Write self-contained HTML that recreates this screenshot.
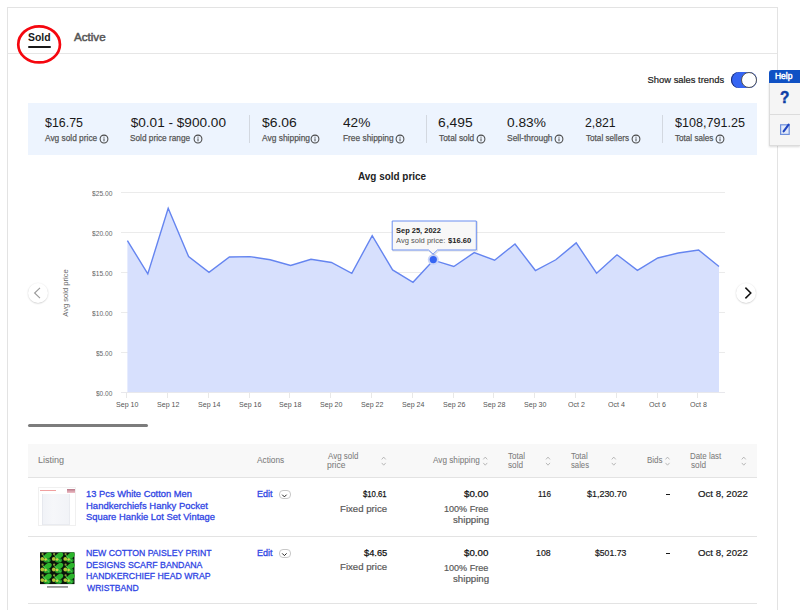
<!DOCTYPE html><html><head><meta charset="utf-8"><style>
html,body{margin:0;padding:0;background:#fff;width:800px;height:610px;overflow:hidden;position:relative;font-family:"Liberation Sans",sans-serif;}
.t{position:absolute;white-space:nowrap;line-height:normal;transform-origin:0 0;}
svg{position:absolute;left:0;top:0;overflow:visible}
</style></head><body>
<div style="position:absolute;left:7px;top:7px;width:771px;height:700px;border:1px solid #e3e3e3;box-sizing:border-box;"></div>
<div style="position:absolute;left:8px;top:53px;width:769px;height:1px;background:#e6e6e6;"></div>
<div class="t" style="left:28.11px;top:31.01px;font-size:10.60px;color:#191919;font-weight:bold;transform:scaleX(0.983);">Sold</div>
<div style="position:absolute;left:28px;top:46.3px;width:23px;height:1.9px;background:#191919;border-radius:1px;"></div>
<div class="t" style="left:74.28px;top:30.73px;font-size:10.80px;color:#555;transform:scaleX(1.076);-webkit-text-stroke:0.45px currentColor;">Active</div>
<div class="t" style="left:647.58px;top:73.89px;font-size:9.40px;color:#222;-webkit-text-stroke:0.2px currentColor;">Show sales trends</div>
<div style="position:absolute;left:730.5px;top:71.5px;width:26.5px;height:16.8px;background:#3665f3;border-radius:9px;box-shadow:inset 1px 0 0 #1a2a70;"></div>
<div style="position:absolute;left:740.5px;top:71.5px;width:16.5px;height:16.5px;background:#fff;border-radius:50%;box-sizing:border-box;border:1px solid #555;"></div>
<div style="position:absolute;left:28px;top:103px;width:729px;height:52px;background:#edf4fe;"></div>
<div class="t" style="left:44.63px;top:115.09px;font-size:13.60px;color:#191919;transform:scaleX(0.913);">$16.75</div>
<div class="t" style="left:44.73px;top:132.30px;font-size:9.50px;color:#555;transform:scaleX(0.877);-webkit-text-stroke:0.25px currentColor;">Avg sold price</div>
<svg style="left:98.75px;top:133.5px" width="10" height="10" viewBox="0 0 10 10"><circle cx="5" cy="5" r="3.9" fill="none" stroke="#4a4a4a" stroke-width="1.05"/><rect x="4.5" y="4.4" width="1" height="2.9" fill="#4a4a4a"/><rect x="4.5" y="2.7" width="1" height="1" fill="#4a4a4a"/></svg>
<div class="t" style="left:130.71px;top:115.09px;font-size:13.60px;color:#191919;">$0.01 - $900.00</div>
<div class="t" style="left:130.48px;top:132.30px;font-size:9.50px;color:#555;transform:scaleX(0.868);-webkit-text-stroke:0.25px currentColor;">Sold price range</div>
<svg style="left:192.50px;top:133.5px" width="10" height="10" viewBox="0 0 10 10"><circle cx="5" cy="5" r="3.9" fill="none" stroke="#4a4a4a" stroke-width="1.05"/><rect x="4.5" y="4.4" width="1" height="2.9" fill="#4a4a4a"/><rect x="4.5" y="2.7" width="1" height="1" fill="#4a4a4a"/></svg>
<div class="t" style="left:262.26px;top:115.09px;font-size:13.60px;color:#191919;transform:scaleX(1.021);">$6.06</div>
<div class="t" style="left:262.38px;top:132.30px;font-size:9.50px;color:#555;transform:scaleX(0.886);-webkit-text-stroke:0.25px currentColor;">Avg shipping</div>
<svg style="left:310.25px;top:133.5px" width="10" height="10" viewBox="0 0 10 10"><circle cx="5" cy="5" r="3.9" fill="none" stroke="#4a4a4a" stroke-width="1.05"/><rect x="4.5" y="4.4" width="1" height="2.9" fill="#4a4a4a"/><rect x="4.5" y="2.7" width="1" height="1" fill="#4a4a4a"/></svg>
<div class="t" style="left:343.10px;top:115.09px;font-size:13.60px;color:#191919;transform:scaleX(1.006);">42%</div>
<div class="t" style="left:342.72px;top:132.30px;font-size:9.50px;color:#555;transform:scaleX(0.878);-webkit-text-stroke:0.25px currentColor;">Free shipping</div>
<svg style="left:394.90px;top:133.5px" width="10" height="10" viewBox="0 0 10 10"><circle cx="5" cy="5" r="3.9" fill="none" stroke="#4a4a4a" stroke-width="1.05"/><rect x="4.5" y="4.4" width="1" height="2.9" fill="#4a4a4a"/><rect x="4.5" y="2.7" width="1" height="1" fill="#4a4a4a"/></svg>
<div class="t" style="left:438.31px;top:115.09px;font-size:13.60px;color:#191919;transform:scaleX(1.017);">6,495</div>
<div class="t" style="left:438.82px;top:132.30px;font-size:9.50px;color:#555;transform:scaleX(0.878);-webkit-text-stroke:0.25px currentColor;">Total sold</div>
<svg style="left:475.60px;top:133.5px" width="10" height="10" viewBox="0 0 10 10"><circle cx="5" cy="5" r="3.9" fill="none" stroke="#4a4a4a" stroke-width="1.05"/><rect x="4.5" y="4.4" width="1" height="2.9" fill="#4a4a4a"/><rect x="4.5" y="2.7" width="1" height="1" fill="#4a4a4a"/></svg>
<div class="t" style="left:507.06px;top:115.09px;font-size:13.60px;color:#191919;transform:scaleX(1.009);">0.83%</div>
<div class="t" style="left:507.22px;top:132.30px;font-size:9.50px;color:#555;transform:scaleX(0.889);-webkit-text-stroke:0.25px currentColor;">Sell-through</div>
<svg style="left:554.40px;top:133.5px" width="10" height="10" viewBox="0 0 10 10"><circle cx="5" cy="5" r="3.9" fill="none" stroke="#4a4a4a" stroke-width="1.05"/><rect x="4.5" y="4.4" width="1" height="2.9" fill="#4a4a4a"/><rect x="4.5" y="2.7" width="1" height="1" fill="#4a4a4a"/></svg>
<div class="t" style="left:585.49px;top:115.09px;font-size:13.60px;color:#191919;transform:scaleX(0.902);">2,821</div>
<div class="t" style="left:585.92px;top:132.30px;font-size:9.50px;color:#555;transform:scaleX(0.857);-webkit-text-stroke:0.25px currentColor;">Total sellers</div>
<svg style="left:630.80px;top:133.5px" width="10" height="10" viewBox="0 0 10 10"><circle cx="5" cy="5" r="3.9" fill="none" stroke="#4a4a4a" stroke-width="1.05"/><rect x="4.5" y="4.4" width="1" height="2.9" fill="#4a4a4a"/><rect x="4.5" y="2.7" width="1" height="1" fill="#4a4a4a"/></svg>
<div class="t" style="left:675.47px;top:115.09px;font-size:13.60px;color:#191919;transform:scaleX(0.926);">$108,791.25</div>
<div class="t" style="left:675.42px;top:132.30px;font-size:9.50px;color:#555;transform:scaleX(0.855);-webkit-text-stroke:0.25px currentColor;">Total sales</div>
<svg style="left:715.00px;top:133.5px" width="10" height="10" viewBox="0 0 10 10"><circle cx="5" cy="5" r="3.9" fill="none" stroke="#4a4a4a" stroke-width="1.05"/><rect x="4.5" y="4.4" width="1" height="2.9" fill="#4a4a4a"/><rect x="4.5" y="2.7" width="1" height="1" fill="#4a4a4a"/></svg>
<div style="position:absolute;left:249px;top:115px;width:1px;height:28px;background:#d3d8e0;"></div>
<div style="position:absolute;left:426px;top:115px;width:1px;height:28px;background:#d3d8e0;"></div>
<div style="position:absolute;left:662px;top:115px;width:1px;height:28px;background:#d3d8e0;"></div>
<div class="t" style="left:357.76px;top:170.75px;font-size:10.00px;color:#222;font-weight:bold;transform:scaleX(0.993);">Avg sold price</div>
<svg width="800" height="610" viewBox="0 0 800 610"><rect x="121" y="192" width="604" height="1" fill="#ebebeb"/><rect x="121" y="232" width="604" height="1" fill="#ebebeb"/><rect x="121" y="272" width="604" height="1" fill="#ebebeb"/><rect x="121" y="312" width="604" height="1" fill="#ebebeb"/><rect x="121" y="352" width="604" height="1" fill="#ebebeb"/><polygon points="127.40,392.5 127.40,240.60 147.80,273.90 168.20,208.20 188.60,256.60 209.00,272.40 229.40,257.00 249.80,256.60 270.20,259.75 290.60,265.40 311.00,259.30 331.40,262.50 351.80,273.25 372.20,235.70 392.60,269.90 413.00,282.25 433.40,260.20 453.80,266.50 474.20,252.60 494.60,260.20 515.00,244.00 535.40,270.50 555.80,259.75 576.20,242.90 596.60,273.25 617.00,254.80 637.40,270.30 657.80,258.00 678.20,253.00 698.60,250.00 719.00,266.50 719.00,392.5" fill="#d7e0fd"/><rect x="121" y="392" width="604" height="1" fill="#e8e8ec"/><polyline points="127.40,240.60 147.80,273.90 168.20,208.20 188.60,256.60 209.00,272.40 229.40,257.00 249.80,256.60 270.20,259.75 290.60,265.40 311.00,259.30 331.40,262.50 351.80,273.25 372.20,235.70 392.60,269.90 413.00,282.25 433.40,260.20 453.80,266.50 474.20,252.60 494.60,260.20 515.00,244.00 535.40,270.50 555.80,259.75 576.20,242.90 596.60,273.25 617.00,254.80 637.40,270.30 657.80,258.00 678.20,253.00 698.60,250.00 719.00,266.50" fill="none" stroke="#6585f0" stroke-width="1.4" stroke-linejoin="miter"/><rect x="126" y="393" width="1" height="5" fill="#e8e8e8"/><rect x="167" y="393" width="1" height="5" fill="#e8e8e8"/><rect x="208" y="393" width="1" height="5" fill="#e8e8e8"/><rect x="249" y="393" width="1" height="5" fill="#e8e8e8"/><rect x="289" y="393" width="1" height="5" fill="#e8e8e8"/><rect x="330" y="393" width="1" height="5" fill="#e8e8e8"/><rect x="371" y="393" width="1" height="5" fill="#e8e8e8"/><rect x="412" y="393" width="1" height="5" fill="#e8e8e8"/><rect x="453" y="393" width="1" height="5" fill="#e8e8e8"/><rect x="493" y="393" width="1" height="5" fill="#e8e8e8"/><rect x="534" y="393" width="1" height="5" fill="#e8e8e8"/><rect x="575" y="393" width="1" height="5" fill="#e8e8e8"/><rect x="616" y="393" width="1" height="5" fill="#e8e8e8"/><rect x="657" y="393" width="1" height="5" fill="#e8e8e8"/><rect x="697" y="393" width="1" height="5" fill="#e8e8e8"/><circle cx="433.3" cy="259.6" r="5.5" fill="#c9d4f8"/><circle cx="433.3" cy="259.6" r="3.6" fill="#3665f3"/><path d="M393.2,222 H477.3 V251 H438.5 L434,255 L429.5,251 H393.2 Z" fill="none" stroke="rgba(0,0,0,0.12)" stroke-width="1.2"/><path d="M392.2,221 H476.3 V250 H437.5 L433,254.2 L428.5,250 H392.2 Z" fill="#f8f8f8" stroke="#6a8ef0" stroke-width="1"/></svg>
<div class="t" style="left:91.88px;top:188.92px;font-size:7.60px;color:#666;transform:scaleX(0.876);">$25.00</div>
<div class="t" style="left:91.88px;top:228.92px;font-size:7.60px;color:#666;transform:scaleX(0.876);">$20.00</div>
<div class="t" style="left:91.88px;top:268.92px;font-size:7.60px;color:#666;transform:scaleX(0.876);">$15.00</div>
<div class="t" style="left:91.88px;top:308.92px;font-size:7.60px;color:#666;transform:scaleX(0.876);">$10.00</div>
<div class="t" style="left:95.93px;top:348.92px;font-size:7.60px;color:#666;transform:scaleX(0.858);">$5.00</div>
<div class="t" style="left:95.93px;top:388.92px;font-size:7.60px;color:#666;transform:scaleX(0.858);">$0.00</div>
<div class="t" style="left:116.18px;top:400.22px;font-size:7.60px;color:#555;transform:scaleX(0.930);">Sep 10</div>
<div class="t" style="left:157.02px;top:400.22px;font-size:7.60px;color:#555;transform:scaleX(0.930);">Sep 12</div>
<div class="t" style="left:197.74px;top:400.22px;font-size:7.60px;color:#555;transform:scaleX(0.930);">Sep 14</div>
<div class="t" style="left:238.59px;top:400.22px;font-size:7.60px;color:#555;transform:scaleX(0.930);">Sep 16</div>
<div class="t" style="left:279.39px;top:400.22px;font-size:7.60px;color:#555;transform:scaleX(0.930);">Sep 18</div>
<div class="t" style="left:320.18px;top:400.22px;font-size:7.60px;color:#555;transform:scaleX(0.930);">Sep 20</div>
<div class="t" style="left:361.02px;top:400.22px;font-size:7.60px;color:#555;transform:scaleX(0.930);">Sep 22</div>
<div class="t" style="left:401.74px;top:400.22px;font-size:7.60px;color:#555;transform:scaleX(0.930);">Sep 24</div>
<div class="t" style="left:442.59px;top:400.22px;font-size:7.60px;color:#555;transform:scaleX(0.930);">Sep 26</div>
<div class="t" style="left:483.39px;top:400.22px;font-size:7.60px;color:#555;transform:scaleX(0.930);">Sep 28</div>
<div class="t" style="left:524.18px;top:400.22px;font-size:7.60px;color:#555;transform:scaleX(0.930);">Sep 30</div>
<div class="t" style="left:567.77px;top:400.22px;font-size:7.60px;color:#555;transform:scaleX(0.930);">Oct 2</div>
<div class="t" style="left:608.49px;top:400.22px;font-size:7.60px;color:#555;transform:scaleX(0.930);">Oct 4</div>
<div class="t" style="left:649.34px;top:400.22px;font-size:7.60px;color:#555;transform:scaleX(0.930);">Oct 6</div>
<div class="t" style="left:690.14px;top:400.22px;font-size:7.60px;color:#555;transform:scaleX(0.930);">Oct 8</div>
<div class="t" style="left:396.39px;top:225.54px;font-size:7.80px;color:#222;font-weight:bold;transform:scaleX(0.959);">Sep 25, 2022</div>
<div class="t" style="left:396.18px;top:235.54px;font-size:7.80px;color:#555;transform:scaleX(0.968);">Avg sold price:</div>
<div class="t" style="left:447.50px;top:235.54px;font-size:7.80px;color:#222;font-weight:bold;transform:scaleX(0.977);">$16.60</div>
<div class="t" style="left:35.75px;top:288px;width:60px;text-align:center;font-size:7.6px;color:#6a6a6a;transform-origin:50% 50%;transform:rotate(-90deg);line-height:10px;">Avg sold price</div>
<div style="position:absolute;left:27.9px;top:282.8px;width:20px;height:20px;border-radius:50%;background:#fff;box-shadow:0 0.5px 1.6px rgba(0,0,0,0.22);"></div>
<div style="position:absolute;left:736.3px;top:283px;width:20px;height:20px;border-radius:50%;background:#fff;box-shadow:0 0.5px 1.6px rgba(0,0,0,0.22);"></div>
<svg width="800" height="610"><path d="M40,287.8 L34.6,293 L40,298.2" fill="none" stroke="#999" stroke-width="1.1"/><path d="M745.4,287.6 L750.8,293 L745.4,298.4" fill="none" stroke="#111" stroke-width="1.5"/></svg>
<div style="position:absolute;left:28px;top:424px;width:120px;height:3.2px;background:#7c7c7c;border-radius:2px;"></div>
<div style="position:absolute;left:28px;top:444px;width:729px;height:33px;background:#f8f8f8;"></div>
<div style="position:absolute;left:28px;top:477px;width:729px;height:1px;background:#e3e3e3;"></div>
<div style="position:absolute;left:28px;top:536px;width:729px;height:1px;background:#e3e3e3;"></div>
<div style="position:absolute;left:28px;top:603px;width:729px;height:1px;background:#e3e3e3;"></div>
<div class="t" style="left:37.76px;top:455.34px;font-size:8.80px;color:#7c7c7c;transform:scaleX(1.027);-webkit-text-stroke:0.05px currentColor;">Listing</div>
<div class="t" style="left:257.08px;top:455.44px;font-size:8.80px;color:#7c7c7c;transform:scaleX(0.943);-webkit-text-stroke:0.05px currentColor;">Actions</div>
<div class="t" style="left:327.78px;top:450.94px;font-size:8.80px;color:#7c7c7c;transform:scaleX(0.903);-webkit-text-stroke:0.05px currentColor;">Avg sold</div>
<div class="t" style="left:327.25px;top:460.14px;font-size:8.80px;color:#7c7c7c;transform:scaleX(0.971);-webkit-text-stroke:0.05px currentColor;">price</div>
<div class="t" style="left:433.38px;top:455.44px;font-size:8.80px;color:#7c7c7c;transform:scaleX(0.931);-webkit-text-stroke:0.05px currentColor;">Avg shipping</div>
<div class="t" style="left:508.32px;top:450.74px;font-size:8.80px;color:#7c7c7c;transform:scaleX(0.915);-webkit-text-stroke:0.05px currentColor;">Total</div>
<div class="t" style="left:508.28px;top:460.14px;font-size:8.80px;color:#7c7c7c;transform:scaleX(0.932);-webkit-text-stroke:0.05px currentColor;">sold</div>
<div class="t" style="left:570.58px;top:450.74px;font-size:8.80px;color:#7c7c7c;transform:scaleX(0.901);-webkit-text-stroke:0.05px currentColor;">Total</div>
<div class="t" style="left:570.54px;top:460.14px;font-size:8.80px;color:#7c7c7c;transform:scaleX(0.878);-webkit-text-stroke:0.05px currentColor;">sales</div>
<div class="t" style="left:646.80px;top:455.34px;font-size:8.80px;color:#7c7c7c;transform:scaleX(0.905);-webkit-text-stroke:0.05px currentColor;">Bids</div>
<div class="t" style="left:690.10px;top:450.74px;font-size:8.80px;color:#7c7c7c;transform:scaleX(0.900);-webkit-text-stroke:0.05px currentColor;">Date last</div>
<div class="t" style="left:690.53px;top:460.14px;font-size:8.80px;color:#7c7c7c;transform:scaleX(0.932);-webkit-text-stroke:0.05px currentColor;">sold</div>
<svg width="800" height="610"><path d="M381.70,459.4 L383.70,457.1 L385.70,459.4 M381.70,462.9 L383.70,465.2 L385.70,462.9" fill="none" stroke="#a8a8a8" stroke-width="0.8"/><path d="M483.25,459.4 L485.25,457.1 L487.25,459.4 M483.25,462.9 L485.25,465.2 L487.25,462.9" fill="none" stroke="#a8a8a8" stroke-width="0.8"/><path d="M546.00,459.4 L548.00,457.1 L550.00,459.4 M546.00,462.9 L548.00,465.2 L550.00,462.9" fill="none" stroke="#a8a8a8" stroke-width="0.8"/><path d="M611.75,459.4 L613.75,457.1 L615.75,459.4 M611.75,462.9 L613.75,465.2 L615.75,462.9" fill="none" stroke="#a8a8a8" stroke-width="0.8"/><path d="M665.50,459.4 L667.50,457.1 L669.50,459.4 M665.50,462.9 L667.50,465.2 L669.50,462.9" fill="none" stroke="#a8a8a8" stroke-width="0.8"/><path d="M741.75,459.4 L743.75,457.1 L745.75,459.4 M741.75,462.9 L743.75,465.2 L745.75,462.9" fill="none" stroke="#a8a8a8" stroke-width="0.8"/></svg>
<div class="t" style="left:86.19px;top:488.21px;font-size:9.60px;color:#2f45e4;transform:scaleX(0.974);-webkit-text-stroke:0.3px currentColor;">13 Pcs White Cotton Men</div>
<div class="t" style="left:86.12px;top:499.81px;font-size:9.60px;color:#2f45e4;transform:scaleX(0.990);-webkit-text-stroke:0.3px currentColor;">Handkerchiefs Hanky Pocket</div>
<div class="t" style="left:86.48px;top:511.41px;font-size:9.60px;color:#2f45e4;transform:scaleX(0.980);-webkit-text-stroke:0.3px currentColor;">Square Hankie Lot Set Vintage</div>
<div class="t" style="left:256.76px;top:488.21px;font-size:9.60px;color:#2f45e4;transform:scaleX(0.937);-webkit-text-stroke:0.3px currentColor;">Edit</div>
<div style="position:absolute;left:278.5px;top:490.29999999999995px;width:12px;height:8.6px;border:1px solid #c8c8c8;border-radius:4px;box-sizing:border-box;background:#fff;"></div>
<div class="t" style="left:363.22px;top:488.30px;font-size:9.50px;color:#111;transform:scaleX(0.814);-webkit-text-stroke:0.25px currentColor;">$10.61</div>
<div class="t" style="left:339.81px;top:502.60px;font-size:9.50px;color:#595959;transform:scaleX(1.014);-webkit-text-stroke:0.2px currentColor;">Fixed price</div>
<div class="t" style="left:464.10px;top:488.30px;font-size:9.50px;color:#111;transform:scaleX(1.021);-webkit-text-stroke:0.25px currentColor;">$0.00</div>
<div class="t" style="left:444.11px;top:503.00px;font-size:9.50px;color:#595959;transform:scaleX(0.953);-webkit-text-stroke:0.2px currentColor;">100% Free</div>
<div class="t" style="left:452.54px;top:514.20px;font-size:9.50px;color:#595959;transform:scaleX(1.020);-webkit-text-stroke:0.2px currentColor;">shipping</div>
<div class="t" style="left:537.58px;top:488.30px;font-size:9.50px;color:#191919;transform:scaleX(0.856);-webkit-text-stroke:0.2px currentColor;">116</div>
<div class="t" style="left:586.86px;top:488.30px;font-size:9.50px;color:#191919;transform:scaleX(0.940);-webkit-text-stroke:0.2px currentColor;">$1,230.70</div>
<div style="position:absolute;left:666.3px;top:493.9px;width:3.6px;height:1.3px;background:#191919;"></div>
<div class="t" style="left:697.50px;top:488.30px;font-size:9.50px;color:#191919;transform:scaleX(1.013);-webkit-text-stroke:0.2px currentColor;">Oct 8, 2022</div>
<div class="t" style="left:86.19px;top:546.91px;font-size:9.60px;color:#2f45e4;transform:scaleX(0.906);-webkit-text-stroke:0.3px currentColor;">NEW COTTON PAISLEY PRINT</div>
<div class="t" style="left:86.18px;top:558.51px;font-size:9.60px;color:#2f45e4;transform:scaleX(0.914);-webkit-text-stroke:0.3px currentColor;">DESIGNS SCARF BANDANA</div>
<div class="t" style="left:86.18px;top:570.11px;font-size:9.60px;color:#2f45e4;transform:scaleX(0.913);-webkit-text-stroke:0.3px currentColor;">HANDKERCHIEF HEAD WRAP</div>
<div class="t" style="left:86.87px;top:581.71px;font-size:9.60px;color:#2f45e4;transform:scaleX(0.898);-webkit-text-stroke:0.3px currentColor;">WRISTBAND</div>
<div class="t" style="left:256.76px;top:546.91px;font-size:9.60px;color:#2f45e4;transform:scaleX(0.937);-webkit-text-stroke:0.3px currentColor;">Edit</div>
<div style="position:absolute;left:278.5px;top:549.0px;width:12px;height:8.6px;border:1px solid #c8c8c8;border-radius:4px;box-sizing:border-box;background:#fff;"></div>
<div class="t" style="left:363.61px;top:547.00px;font-size:9.50px;color:#111;transform:scaleX(0.979);-webkit-text-stroke:0.25px currentColor;">$4.65</div>
<div class="t" style="left:339.81px;top:561.30px;font-size:9.50px;color:#595959;transform:scaleX(1.014);-webkit-text-stroke:0.2px currentColor;">Fixed price</div>
<div class="t" style="left:464.10px;top:547.00px;font-size:9.50px;color:#111;transform:scaleX(1.021);-webkit-text-stroke:0.25px currentColor;">$0.00</div>
<div class="t" style="left:444.11px;top:561.70px;font-size:9.50px;color:#595959;transform:scaleX(0.953);-webkit-text-stroke:0.2px currentColor;">100% Free</div>
<div class="t" style="left:452.54px;top:572.90px;font-size:9.50px;color:#595959;transform:scaleX(1.020);-webkit-text-stroke:0.2px currentColor;">shipping</div>
<div class="t" style="left:535.93px;top:547.00px;font-size:9.50px;color:#191919;transform:scaleX(0.924);-webkit-text-stroke:0.2px currentColor;">108</div>
<div class="t" style="left:595.36px;top:547.00px;font-size:9.50px;color:#191919;transform:scaleX(0.910);-webkit-text-stroke:0.2px currentColor;">$501.73</div>
<div style="position:absolute;left:666.3px;top:552.6px;width:3.6px;height:1.3px;background:#191919;"></div>
<div class="t" style="left:697.50px;top:547.00px;font-size:9.50px;color:#191919;transform:scaleX(1.013);-webkit-text-stroke:0.2px currentColor;">Oct 8, 2022</div>
<svg width="800" height="610"><path d="M282.2,494.70 L284.4,496.90 L286.6,494.70" fill="none" stroke="#222" stroke-width="1"/><path d="M282.2,553.40 L284.4,555.60 L286.6,553.40" fill="none" stroke="#222" stroke-width="1"/></svg>
<div style="position:absolute;left:38px;top:487px;width:38px;height:39px;background:#fff;border:1px solid #f0f0f0;box-sizing:border-box;"></div>
<div style="position:absolute;left:39.5px;top:489.5px;width:16px;height:1.3px;background:#f0a0a0;"></div>
<div style="position:absolute;left:67px;top:488.7px;width:8.3px;height:4.3px;background:linear-gradient(#b87888,#f0c0c8);"></div>
<div style="position:absolute;left:41.5px;top:494px;width:28px;height:30.5px;background:linear-gradient(90deg,#f0f2f7,#f6f7fa 40%,#f1f3f7);box-shadow:inset 1px 0 0 #e6e8ee,inset -1px -1px 0 #e9ebf0;"></div>
<svg width="800" height="610"><rect x="40" y="552.3" width="34.5" height="31.8" fill="#0a140a"/><ellipse cx="47.8" cy="555.7" rx="4.3" ry="2.7" fill="#2cb52c" transform="rotate(-35 47.8 555.7)"/><ellipse cx="47.0" cy="560.3" rx="3.6" ry="2.4" fill="#1f9a28"/><path d="M43.0,555.3 L49.0,561.3" stroke="#48c848" stroke-width="1.2"/><circle cx="42.3" cy="558.9" r="1.9" fill="#b4c43a"/><circle cx="45.6" cy="559.5" r="1.3" fill="#cfd24a"/><circle cx="42.6" cy="554.1" r="1.1" fill="#8a9a38"/><ellipse cx="47.8" cy="566.3" rx="4.3" ry="2.7" fill="#2cb52c" transform="rotate(-35 47.8 566.3)"/><ellipse cx="47.0" cy="570.9" rx="3.6" ry="2.4" fill="#1f9a28"/><path d="M43.0,565.9 L49.0,571.9" stroke="#48c848" stroke-width="1.2"/><circle cx="42.3" cy="569.5" r="1.9" fill="#b4c43a"/><circle cx="45.6" cy="570.1" r="1.3" fill="#cfd24a"/><circle cx="42.6" cy="564.7" r="1.1" fill="#8a9a38"/><ellipse cx="47.8" cy="576.9" rx="4.3" ry="2.7" fill="#2cb52c" transform="rotate(-35 47.8 576.9)"/><ellipse cx="47.0" cy="581.5" rx="3.6" ry="2.4" fill="#1f9a28"/><path d="M43.0,576.5 L49.0,582.5" stroke="#48c848" stroke-width="1.2"/><circle cx="42.3" cy="580.1" r="1.9" fill="#b4c43a"/><circle cx="45.6" cy="580.7" r="1.3" fill="#cfd24a"/><circle cx="42.6" cy="575.3" r="1.1" fill="#8a9a38"/><ellipse cx="59.3" cy="555.7" rx="4.3" ry="2.7" fill="#2cb52c" transform="rotate(-35 59.3 555.7)"/><ellipse cx="58.5" cy="560.3" rx="3.6" ry="2.4" fill="#1f9a28"/><path d="M54.5,555.3 L60.5,561.3" stroke="#48c848" stroke-width="1.2"/><circle cx="53.8" cy="558.9" r="1.9" fill="#b4c43a"/><circle cx="57.1" cy="559.5" r="1.3" fill="#cfd24a"/><circle cx="54.1" cy="554.1" r="1.1" fill="#8a9a38"/><ellipse cx="59.3" cy="566.3" rx="4.3" ry="2.7" fill="#2cb52c" transform="rotate(-35 59.3 566.3)"/><ellipse cx="58.5" cy="570.9" rx="3.6" ry="2.4" fill="#1f9a28"/><path d="M54.5,565.9 L60.5,571.9" stroke="#48c848" stroke-width="1.2"/><circle cx="53.8" cy="569.5" r="1.9" fill="#b4c43a"/><circle cx="57.1" cy="570.1" r="1.3" fill="#cfd24a"/><circle cx="54.1" cy="564.7" r="1.1" fill="#8a9a38"/><ellipse cx="59.3" cy="576.9" rx="4.3" ry="2.7" fill="#2cb52c" transform="rotate(-35 59.3 576.9)"/><ellipse cx="58.5" cy="581.5" rx="3.6" ry="2.4" fill="#1f9a28"/><path d="M54.5,576.5 L60.5,582.5" stroke="#48c848" stroke-width="1.2"/><circle cx="53.8" cy="580.1" r="1.9" fill="#b4c43a"/><circle cx="57.1" cy="580.7" r="1.3" fill="#cfd24a"/><circle cx="54.1" cy="575.3" r="1.1" fill="#8a9a38"/><ellipse cx="70.8" cy="555.7" rx="4.3" ry="2.7" fill="#2cb52c" transform="rotate(-35 70.8 555.7)"/><ellipse cx="70.0" cy="560.3" rx="3.6" ry="2.4" fill="#1f9a28"/><path d="M66.0,555.3 L72.0,561.3" stroke="#48c848" stroke-width="1.2"/><circle cx="65.3" cy="558.9" r="1.9" fill="#b4c43a"/><circle cx="68.6" cy="559.5" r="1.3" fill="#cfd24a"/><circle cx="65.6" cy="554.1" r="1.1" fill="#8a9a38"/><ellipse cx="70.8" cy="566.3" rx="4.3" ry="2.7" fill="#2cb52c" transform="rotate(-35 70.8 566.3)"/><ellipse cx="70.0" cy="570.9" rx="3.6" ry="2.4" fill="#1f9a28"/><path d="M66.0,565.9 L72.0,571.9" stroke="#48c848" stroke-width="1.2"/><circle cx="65.3" cy="569.5" r="1.9" fill="#b4c43a"/><circle cx="68.6" cy="570.1" r="1.3" fill="#cfd24a"/><circle cx="65.6" cy="564.7" r="1.1" fill="#8a9a38"/><ellipse cx="70.8" cy="576.9" rx="4.3" ry="2.7" fill="#2cb52c" transform="rotate(-35 70.8 576.9)"/><ellipse cx="70.0" cy="581.5" rx="3.6" ry="2.4" fill="#1f9a28"/><path d="M66.0,576.5 L72.0,582.5" stroke="#48c848" stroke-width="1.2"/><circle cx="65.3" cy="580.1" r="1.9" fill="#b4c43a"/><circle cx="68.6" cy="580.7" r="1.3" fill="#cfd24a"/><circle cx="65.6" cy="575.3" r="1.1" fill="#8a9a38"/><rect x="47" y="586.4" width="21" height="1.1" fill="#555"/></svg>
<div style="position:absolute;left:769px;top:82px;width:31px;height:64px;background:#f5f5f5;border:1px solid #dcdcdc;border-right:none;box-shadow:0 1px 2px rgba(0,0,0,0.15);box-sizing:border-box;"></div>
<div style="position:absolute;left:769px;top:70px;width:31px;height:12.6px;background:#0f51c4;border-top-left-radius:3px;"></div>
<div class="t" style="left:775.30px;top:71.08px;font-size:9.30px;color:#fff;transform:scaleX(0.912);-webkit-text-stroke:0.5px currentColor;">Help</div>
<div style="position:absolute;left:770px;top:114px;width:30px;height:1px;background:#dcdcdc;"></div>
<div class="t" style="left:779.71px;top:88.62px;font-size:16.00px;color:#0d3ea6;font-weight:bold;transform:scaleX(0.958);-webkit-text-stroke:0.5px currentColor;">?</div>
<svg width="800" height="610"><rect x="780.6" y="124.8" width="8.6" height="9.6" fill="#e3eaf8" stroke="#6d8fdc" stroke-width="1.2"/><path d="M788.6,124.6 L783.6,131.4" stroke="#1f44c0" stroke-width="2.1" stroke-linecap="round"/></svg>
<svg width="800" height="610"><ellipse cx="39.1" cy="44.4" rx="20.85" ry="18.05" fill="none" stroke="#f5070f" stroke-width="2.7"/></svg>
</body></html>
